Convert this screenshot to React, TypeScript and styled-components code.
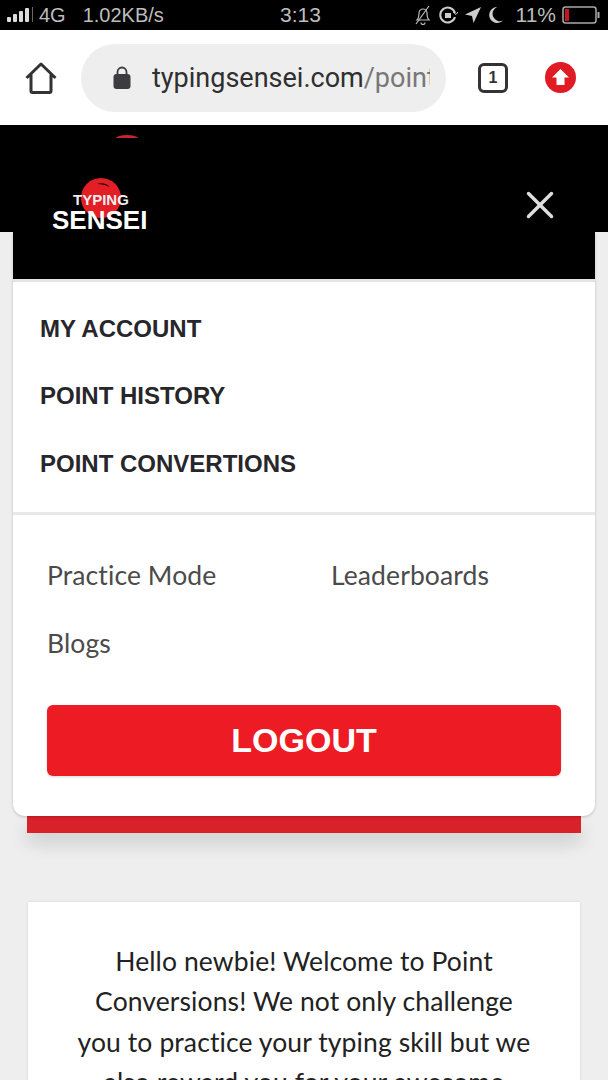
import React from "react";
import styled, { createGlobalStyle } from "styled-components";
import { X } from "lucide-react";

const GlobalStyle = createGlobalStyle`
    html, body {
        margin: 0;
        padding: 0;
        height: 1080px;
        overflow: hidden;
        background: #eeeeee;
    }
`;

const Page = styled.div`
    width: 608px;
    height: 1080px;
    overflow: hidden;
    background: #eeeeee;
    font-family: "Lato", "Open Sans", sans-serif;
`;

const StatusBar = styled.div`
    height: 30px;
    background: #000;
    color: #bdbdbd;
    display: grid;
    grid-template-columns: 1fr auto 1fr;
    align-items: center;
    padding: 0 8px 0 7px;
    font-family: "Liberation Sans", sans-serif;
    font-size: 20px;
`;
const StatusGroup = styled.div<{ $end?: boolean }>`
    display: flex;
    align-items: center;
    justify-content: ${(p) => (p.$end ? "flex-end" : "flex-start")};
    gap: 6px;
`;
const Speed = styled.span`
    margin-left: 11px;
`;
const Clock = styled.span`
    font-size: 21px;
    margin-left: -6px;
`;
const Percent = styled.span`
    margin-left: 6px;
    font-size: 21px;
`;

const BrowserBar = styled.div`
    height: 95px;
    background: #fff;
    display: flex;
    align-items: center;
    padding: 0 0 0 25px;
`;
const UrlPill = styled.div`
    width: 365px;
    height: 68px;
    margin: 0 32px 0 24px;
    padding: 0 15px 0 32px;
    box-sizing: border-box;
    border-radius: 34px;
    background: #eeeeee;
    display: flex;
    align-items: center;
    gap: 21px;
    flex-shrink: 0;
`;
const UrlText = styled.div`
    width: 278px;
    overflow: hidden;
    white-space: nowrap;
    font-family: "Roboto", sans-serif;
    font-size: 27px;
    color: #2f2f2f;
`;
const UrlPath = styled.span`
    color: #777;
`;
const TabCount = styled.div`
    width: 24px;
    height: 24px;
    border: 3px solid #333;
    border-radius: 6px;
    display: flex;
    align-items: center;
    justify-content: center;
    font-family: "Liberation Sans", sans-serif;
    font-weight: 700;
    font-size: 16px;
    color: #333;
    margin-right: 37px;
`;

const Header = styled.header`
    height: 107px;
    background: #000;
    position: relative;
    display: flex;
    align-items: flex-end;
    justify-content: space-between;
    padding: 0 54px 4px 52px;
    box-sizing: border-box;
`;
const SunSliver = styled.div`
    position: absolute;
    left: 116px;
    top: 10px;
    width: 22px;
    height: 3px;
    background: #c9252c;
    border-radius: 50% 50% 0 0 / 100% 100% 0 0;
`;
const Logo = styled.div`
    position: relative;
    width: 96px;
    height: 54px;
    margin-bottom: -4px;
`;
const LogoSun = styled.svg`
    position: absolute;
    left: 29px;
    top: 0;
`;
const LogoSmall = styled.div`
    position: absolute;
    left: 21px;
    top: 13px;
    font-family: "Liberation Sans", sans-serif;
    font-weight: 700;
    font-size: 15px;
    line-height: 17px;
    color: #eee;
`;
const LogoBig = styled.div`
    position: absolute;
    left: 0;
    top: 27px;
    font-family: "Liberation Sans", sans-serif;
    font-weight: 700;
    font-size: 26px;
    line-height: 30px;
    color: #fff;
`;
const CloseButton = styled.div`
    color: #dedede;
    display: flex;
    margin-right: -9px;
`;

const MenuCard = styled.div`
    margin: 0 13px;
    background: #fff;
    border-radius: 0 0 12px 12px;
    box-shadow: 0 1px 3px rgba(0, 0, 0, 0.2);
    position: relative;
    z-index: 1;
`;
const CardTop = styled.div`
    height: 47px;
    background: #000;
    border-bottom: 3px solid #e4e4e4;
`;
const AccountList = styled.div`
    padding: 13px 27px 14px;
    border-bottom: 3px solid #e8e8e8;
    display: flex;
    flex-direction: column;
`;
const AccountLink = styled.a`
    height: 67.5px;
    display: flex;
    align-items: center;
    font-family: "Liberation Sans", sans-serif;
    font-weight: 700;
    font-size: 24px;
    color: #26262b;
    white-space: nowrap;
`;
const SiteLinks = styled.div`
    display: grid;
    grid-template-columns: 284px 1fr;
    padding: 26px 34px 0;
    grid-auto-rows: 68px;
    align-items: center;
`;
const SiteLink = styled.a`
    font-size: 26.5px;
    letter-spacing: 0.1px;
    color: #4b4b4b;
`;
const LogoutButton = styled.button`
    display: flex;
    align-items: center;
    justify-content: center;
    width: 514px;
    height: 71px;
    margin: 28px 0 0 34px;
    border: none;
    border-radius: 6px;
    background: #ed1c24;
    box-shadow: 0 1px 3px rgba(0, 0, 0, 0.15);
    color: #fff;
    font-family: "Liberation Sans", sans-serif;
    font-weight: 700;
    font-size: 34px;
`;
const CardFoot = styled.div`
    height: 40px;
`;
const RedStrip = styled.div`
    height: 17px;
    margin: 0 27px;
    background: #d82128;
    box-shadow: 0 10px 18px rgba(0, 0, 0, 0.14);
`;
const IntroCard = styled.section`
    margin: 69px 28px 0;
    padding: 39px 46px 0;
    background: #fff;
    box-shadow: 0 0 3px rgba(0, 0, 0, 0.1);
    text-align: center;
    font-size: 26.5px;
    letter-spacing: 0.1px;
    line-height: 40.5px;
    color: #222;
    height: 300px;
`;

function App() {
    return (
        <Page>
            <GlobalStyle />
            <StatusBar>
                <StatusGroup>
                    <svg width="26" height="16" viewBox="0 0 26 16" fill="#ddd">
                        <rect x="0" y="10" width="4" height="5" rx="1" />
                        <rect x="6" y="7" width="4" height="8" rx="1" />
                        <rect x="12" y="4" width="4" height="11" rx="1" />
                        <rect x="18" y="1" width="4" height="14" rx="1" />
                        <rect x="25" y="0" width="1" height="15" fill="#666" />
                    </svg>
                    <span>4G</span>
                    <Speed>1.02KB/s</Speed>
                </StatusGroup>
                <Clock>3:13</Clock>
                <StatusGroup $end>
                    <svg width="18" height="20" viewBox="0 0 18 20" fill="none" stroke="#bbb" strokeWidth="1.2">
                        <path d="M3 15c2-2 2-4 2-7a4 4 0 0 1 8 0c0 3 0 5 2 7z" />
                        <path d="M7 17.500a2 2 0 0 0 4 0M2 19 15 1" />
                    </svg>
                    <svg width="20" height="20" viewBox="0 0 20 20" fill="none" stroke="#ccc" strokeWidth="2">
                        <path d="M17 12a7.500 7.500 0 1 1 0-4" />
                        <rect x="7" y="8" width="6" height="5" fill="#ccc" stroke="none" />
                        <path d="M15 7l3 2.500L20 7" strokeWidth="1" />
                    </svg>
                    <svg width="18" height="18" viewBox="0 0 18 18" fill="#ccc">
                        <path d="M17 1 1 8.500l7 1.500 1.500 7z" />
                    </svg>
                    <svg width="16" height="18" viewBox="0 0 16 18" fill="#ccc">
                        <path d="M9 1a8 8 0 1 0 6 13.500A7 7 0 0 1 9 1z" />
                    </svg>
                    <Percent>11%</Percent>
                    <svg width="38" height="18" viewBox="0 0 38 18" fill="none">
                        <rect x="1" y="1" width="33" height="16" rx="2.500" stroke="#aaa" strokeWidth="1.500" />
                        <rect x="3" y="3" width="4" height="12" fill="#c4161c" />
                        <rect x="35.500" y="6" width="2" height="6" fill="#aaa" />
                    </svg>
                </StatusGroup>
            </StatusBar>
            <BrowserBar>
                <svg width="32" height="32" viewBox="0 0 32 32" fill="none" stroke="#333" strokeWidth="3" strokeLinejoin="round">
                    <path d="M1.500 16 16 2l14.500 14M6 12v17a1.500 1.500 0 0 0 1.500 1.500h17A1.500 1.500 0 0 0 26 29V12" />
                </svg>
                <UrlPill>
                    <svg width="18" height="23" viewBox="0 0 18 23">
                        <rect x="0.500" y="8" width="17" height="15" rx="3" fill="#3c3c40" />
                        <path d="M4.500 9V6a4.500 4.500 0 0 1 9 0v3" fill="none" stroke="#3c3c40" strokeWidth="1.800" />
                    </svg>
                    <UrlText>
                        typingsensei.com<UrlPath>/point-conversions</UrlPath>
                    </UrlText>
                </UrlPill>
                <TabCount>1</TabCount>
                <svg width="31" height="31" viewBox="0 0 31 31">
                    <circle cx="15.500" cy="15.500" r="15.500" fill="#e01b24" />
                    <path d="M15.500 7 24 15.500h-4.500V23h-8v-7.500H7z" fill="#fff" />
                </svg>
            </BrowserBar>
            <Header>
                <SunSliver />
                <Logo>
                    <LogoSun width="40" height="40" viewBox="0 0 40 40">
                        <circle cx="20" cy="20" r="20" fill="#e31e24" />
                        <path d="M16 6c5-2 10 0 13 3-4-2-8-3-13-3z" fill="#000" />
                    </LogoSun>
                    <LogoSmall>TYPING</LogoSmall>
                    <LogoBig>SENSEI</LogoBig>
                </Logo>
                <CloseButton>
                    <X size={46} strokeWidth={1.8} />
                </CloseButton>
            </Header>
            <MenuCard>
                <CardTop />
                <AccountList>
                    <AccountLink>MY ACCOUNT</AccountLink>
                    <AccountLink>POINT HISTORY</AccountLink>
                    <AccountLink>POINT CONVERTIONS</AccountLink>
                </AccountList>
                <SiteLinks>
                    <SiteLink>Practice Mode</SiteLink>
                    <SiteLink>Leaderboards</SiteLink>
                    <SiteLink>Blogs</SiteLink>
                </SiteLinks>
                <LogoutButton>LOGOUT</LogoutButton>
                <CardFoot />
            </MenuCard>
            <RedStrip />
            <IntroCard>
                Hello newbie! Welcome to Point Conversions! We not only challenge you to practice your typing skill but we also reward you for your awesome
            </IntroCard>
        </Page>
    );
}

export default App;
